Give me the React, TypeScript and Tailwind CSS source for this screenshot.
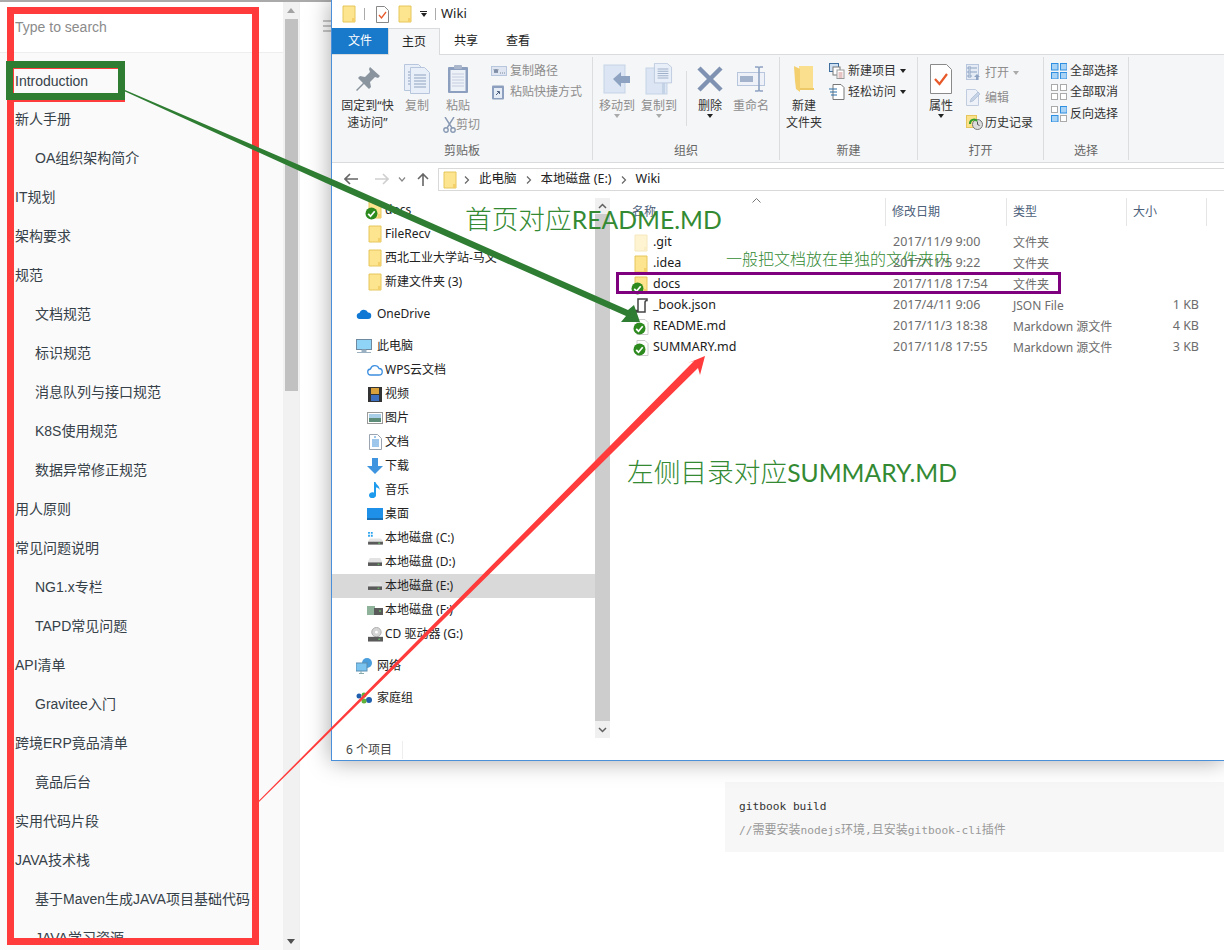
import { ReactNode } from "react";

const navItems = [
  { text: "Introduction", first: true },
  { text: "新人手册" },
  { text: "OA组织架构简介", sub: true },
  { text: "IT规划" },
  { text: "架构要求" },
  { text: "规范" },
  { text: "文档规范", sub: true },
  { text: "标识规范", sub: true },
  { text: "消息队列与接口规范", sub: true },
  { text: "K8S使用规范", sub: true },
  { text: "数据异常修正规范", sub: true },
  { text: "用人原则" },
  { text: "常见问题说明" },
  { text: "NG1.x专栏", sub: true },
  { text: "TAPD常见问题", sub: true },
  { text: "API清单" },
  { text: "Gravitee入门", sub: true },
  { text: "跨境ERP竟品清单" },
  { text: "竟品后台", sub: true },
  { text: "实用代码片段" },
  { text: "JAVA技术栈" },
  { text: "基于Maven生成JAVA项目基础代码", sub: true },
  { text: "JAVA学习资源", sub: true },
];

const Folder = ({ faded, className = "" }: { faded?: boolean; className?: string }) => (
  <svg width="14" height="18" viewBox="0 0 14 18" className={`${faded ? "opacity-40" : ""} ${className}`}>
    <path d="M1 1h12v16H1z" fill="#fde58f" stroke="#e6c65c" />
    <path d="M10 13h3v4h-3z" fill="#f4d06a" />
  </svg>
);

const Check = ({ className = "" }: { className?: string }) => (
  <svg width="13" height="13" viewBox="0 0 13 13" className={className}>
    <circle cx="6.5" cy="6.5" r="6" fill="#2d8a1e" />
    <path d="M3.2 6.8l2.3 2.4 4.2-5" fill="none" stroke="#fff" strokeWidth="1.7" />
  </svg>
);

const BadgedFolder = () => (
  <span className="relative block h-[18px] w-[14px]">
    <Folder />
    <Check className="absolute -left-[3px] top-[6px]" />
  </span>
);

const Doc = () => (
  <span className="relative block h-[16px] w-[14px]">
    <svg width="13" height="16" viewBox="0 0 13 16" className="absolute left-[2px] top-0">
      <path d="M1 .5h8l3 3v12H1z" fill="#fff" stroke="#ccc" />
    </svg>
    <Check className="absolute -left-[1px] top-[3px]" />
  </span>
);

const Page = ({ x = 0, y = 0 }: { x?: number; y?: number }) => (
  <g transform={`translate(${x} ${y})`}>
    <path d="M.5.5h14l5 5v21H.5z" fill="#e9eff8" stroke="#b7c6dc" />
    <path d="M4 8h12M4 11h12M4 14h12M4 17h12M4 20h12" stroke="#8fa3c0" />
  </g>
);

const PinIcon = () => (
  <svg width="26" height="26" viewBox="0 0 26 26">
    <path d="M15 1l10 9-2 2-3-1-5 5 1 5-2 2-5-5-7 7-1-1 7-7-5-5 2-2 5 1 5-5-1-3z" fill="#8a949f" />
  </svg>
);
const CopyIcon = () => (
  <svg width="26" height="30" viewBox="0 0 26 30">
    <Page />
    <Page x={6} y={3} />
  </svg>
);
const PasteIcon = () => (
  <svg width="22" height="30" viewBox="0 0 22 30">
    <rect x="1" y="3" width="20" height="26" rx="1" fill="#8c9fbe" />
    <rect x="3.5" y="6" width="15" height="21" fill="#edf1f8" />
    <path d="M5 10h12M5 13h12M5 16h12M5 19h12M5 22h12" stroke="#c5cfe0" />
    <rect x="7" y="1" width="8" height="4" rx="1" fill="#a9b6cc" />
  </svg>
);
const CutIcon = () => (
  <svg width="13" height="16" viewBox="0 0 13 16" fill="none" stroke="#8899b4" strokeWidth="1.4">
    <path d="M2 0l7 11M11 0L4 11" />
    <circle cx="3" cy="13" r="2.2" />
    <circle cx="10" cy="13" r="2.2" />
  </svg>
);
const PathIcon = () => (
  <svg width="16" height="10" viewBox="0 0 16 10">
    <rect x=".5" y=".5" width="15" height="9" fill="#dfe6f1" stroke="#b7c6dc" />
    <path d="M3 3l1 4 1-4 1 4 1-4M9 7h1M11 7h1M13 7h1" stroke="#5d6f8c" fill="none" strokeWidth=".8" />
  </svg>
);
const ShortcutIcon = () => (
  <svg width="14" height="16" viewBox="0 0 14 16">
    <rect x="1" y="1.5" width="12" height="14" rx="1" fill="#8c9fbe" />
    <rect x="3" y="4" width="8" height="10" fill="#e6ecf5" />
    <path d="M5 11l3-3M6 7.5h2.5V10" stroke="#4e617f" fill="none" />
  </svg>
);
const MoveIcon = () => (
  <svg width="28" height="30" viewBox="0 0 28 30">
    <rect x="1" y="1" width="21" height="28" fill="#dbe5f3" stroke="#c5d3e6" />
    <path d="M10 15l8-7v4h9v7h-9v4z" fill="#8ea3c2" />
  </svg>
);
const CopyToIcon = () => (
  <svg width="28" height="32" viewBox="0 0 28 32">
    <rect x="1" y="5" width="21" height="26" fill="#dbe5f3" stroke="#c5d3e6" />
    <rect x="17" y="5" width="3" height="26" fill="#c5d3e6" />
    <g transform="translate(9 0) scale(.9 .75)">
      <Page />
    </g>
  </svg>
);
const DeleteIcon = () => (
  <svg width="26" height="26" viewBox="0 0 26 26">
    <path d="M2 2l22 22M24 2L2 24" stroke="#7f92b2" strokeWidth="4.5" />
  </svg>
);
const RenameIcon = () => (
  <svg width="28" height="26" viewBox="0 0 28 26">
    <rect x=".5" y="6.5" width="27" height="13" fill="#eef2f8" stroke="#b7c6dc" />
    <rect x="3" y="10" width="13" height="6" fill="#a3b3cc" />
    <path d="M18 1h3l1 1 1-1h3M22 2v22M18 25h3l1-1 1 1h3" stroke="#8ea3c2" strokeWidth="1.6" fill="none" />
  </svg>
);
const NewFolderIcon = () => (
  <svg width="20" height="28" viewBox="0 0 20 28">
    <path d="M5 1h14v22H5z" fill="#fadf8e" />
    <path d="M0 1l6 3v23l-4-3-1-8z" fill="#f3cf6e" />
    <path d="M6 23h14v2H6z" fill="#edc968" />
  </svg>
);
const NewItemIcon = () => (
  <svg width="16" height="16" viewBox="0 0 16 16">
    <rect x=".5" y=".5" width="9" height="8" fill="#cfe0f3" stroke="#3f6f9e" />
    <rect x="4" y="4" width="7" height="8" fill="#fff" stroke="#777" />
    <rect x="8" y="7" width="7" height="8.5" fill="#fff" stroke="#999" />
    <path d="M9.5 10h4M9.5 12h4M9.5 14h4" stroke="#d08a8a" />
  </svg>
);
const EasyIcon = () => (
  <svg width="16" height="16" viewBox="0 0 16 16">
    <path d="M4 .5h8l3 3v12H4z" fill="#fff" stroke="#777" />
    <path d="M0 5h8M1 8h7M2 11h6" stroke="#2a6ea6" strokeWidth="1.1" />
  </svg>
);
const PropsIcon = () => (
  <svg width="22" height="30" viewBox="0 0 22 30">
    <path d="M.5.5h16l5 5v24H.5z" fill="#fff" stroke="#8a8a8a" />
    <path d="M5 15l4.5 5L17 10" fill="none" stroke="#e8592a" strokeWidth="2.2" />
  </svg>
);
const OpenIcon = () => (
  <svg width="15" height="17" viewBox="0 0 15 17">
    <rect x=".5" y=".5" width="12" height="15" fill="#e4ebf5" stroke="#b7c6dc" />
    <path d="M2 3h3v2H2zM2 7h3v2H2zM2 11h3v2H2zM6 4h5M6 8h5" stroke="#8ea3c2" fill="none" />
    <path d="M8 13l3-3 3 3h-2v3h-2v-3z" fill="#8ea3c2" />
  </svg>
);
const EditIcon = () => (
  <svg width="15" height="17" viewBox="0 0 15 17">
    <path d="M.5.5h9l3 3v13h-12z" fill="#eef2f8" stroke="#c0cde0" />
    <path d="M4 13l1-3 7-7 2 2-7 7z" fill="#c6d3e6" stroke="#9fb1cc" strokeWidth=".6" />
  </svg>
);
const HistoryIcon = () => (
  <svg width="17" height="15" viewBox="0 0 17 15">
    <rect x=".5" y=".5" width="10" height="12" fill="#fce18b" stroke="#e6c65c" />
    <circle cx="11.5" cy="9.5" r="5" fill="#ddd" stroke="#777" />
    <path d="M11.5 6.5v3l2 1" stroke="#555" fill="none" />
    <path d="M4 9a4 4 0 0 1 7-3" stroke="#2f9e2a" strokeWidth="2" fill="none" />
  </svg>
);
const Grid4 = ({ on }: { on: number[] }) => (
  <svg width="16" height="16" viewBox="0 0 16 16">
    {[
      [0, 0],
      [9, 0],
      [0, 9],
      [9, 9],
    ].map(([x, y], i) =>
      on.includes(i) ? (
        <rect key={i} x={x + 0.5} y={y + 0.5} width="6.5" height="6.5" fill="#a9d3f5" stroke="#2f8fe0" />
      ) : (
        <rect key={i} x={x + 0.5} y={y + 0.5} width="6" height="6" fill="#fff" stroke="#aaa" />
      ),
    )}
  </svg>
);

const Caret = ({ dark }: { dark?: boolean }) => (
  <span className={`inline-block h-0 w-0 border-x-[3.5px] border-t-[4px] border-x-transparent ${dark ? "border-t-[#222]" : "border-t-[#aaa]"}`} />
);

const Large = ({
  icon,
  children,
  w,
  off,
  caret,
}: {
  icon: ReactNode;
  children: ReactNode;
  w: string;
  off?: boolean;
  caret?: "dark" | "light";
}) => (
  <div className={`flex flex-col items-center ${w} ${off ? "text-[#8d8d8d]" : "text-[#333]"}`}>
    <div className="flex h-[37px] items-center justify-center">{icon}</div>
    <div className="whitespace-nowrap text-center leading-[17px]">{children}</div>
    {caret && (
      <div className="-mt-[1px] flex h-[6px] items-center">
        <Caret dark={caret === "dark"} />
      </div>
    )}
  </div>
);

const Small = ({
  icon,
  children,
  h,
  off,
  caret,
  iconW = "w-[19px]",
}: {
  icon: ReactNode;
  children: ReactNode;
  h: string;
  off?: boolean;
  caret?: "dark" | "light";
  iconW?: string;
}) => (
  <div className={`flex items-center whitespace-nowrap ${h} ${off ? "text-[#8d8d8d]" : "text-[#333]"}`}>
    <span className={`flex ${iconW} items-center`}>{icon}</span>
    {children}
    {caret && (
      <span className="ml-[4px] flex items-center">
        <Caret dark={caret === "dark"} />
      </span>
    )}
  </div>
);

const Group = ({ w, label, children }: { w: string; label: string; children: ReactNode }) => (
  <div className={`my-[2px] flex shrink-0 flex-col border-r border-[#dcdddf] ${w}`}>
    <div className="flex flex-1 pt-[3px]">{children}</div>
    <div className="h-[18px] text-center leading-[18px] text-[#666]">{label}</div>
  </div>
);

const Ribbon = () => (
  <div className="flex h-[107px] bg-[#f5f6f7] text-[12px]">
    <Group w="w-[261px]" label="剪贴板">
      <div className="w-[8px]" />
      <Large w="w-[55px]" icon={<PinIcon />}>
        固定到“快
        <br />
        速访问”
      </Large>
      <Large w="w-[44px]" off icon={<CopyIcon />}>
        复制
      </Large>
      <div className="w-[38px]">
        <Large w="w-[38px]" off icon={<PasteIcon />}>
          粘贴
        </Large>
        <div className="mt-[2px] pl-[4px]">
          <Small h="h-[18px]" off icon={<CutIcon />} iconW="w-[21px]">
            剪切
          </Small>
        </div>
      </div>
      <div className="ml-[14px]">
        <Small h="h-[21px]" off icon={<PathIcon />}>
          复制路径
        </Small>
        <Small h="h-[21px]" off icon={<ShortcutIcon />}>
          粘贴快捷方式
        </Small>
      </div>
    </Group>
    <Group w="w-[187px]" label="组织">
      <Large w="w-[48px]" off caret="light" icon={<MoveIcon />}>
        移动到
      </Large>
      <Large w="w-[36px]" off caret="light" icon={<CopyToIcon />}>
        复制到
      </Large>
      <div className="ml-[9px] mt-[11px] h-[55px] w-px bg-[#dcdddf]" />
      <Large w="w-[46px]" caret="dark" icon={<DeleteIcon />}>
        删除
      </Large>
      <Large w="w-[36px]" off icon={<RenameIcon />}>
        重命名
      </Large>
    </Group>
    <Group w="w-[138px]" label="新建">
      <Large w="w-[48px]" icon={<NewFolderIcon />}>
        新建
        <br />
        文件夹
      </Large>
      <div className="ml-[1px]">
        <Small h="h-[21px]" caret="dark" icon={<NewItemIcon />}>
          新建项目
        </Small>
        <Small h="h-[21px]" caret="dark" icon={<EasyIcon />}>
          轻松访问
        </Small>
      </div>
    </Group>
    <Group w="w-[126px]" label="打开">
      <Large w="w-[46px]" caret="dark" icon={<PropsIcon />}>
        属性
      </Large>
      <div className="ml-[2px]">
        <Small h="h-[25px]" off caret="light" icon={<OpenIcon />}>
          打开
        </Small>
        <Small h="h-[25px]" off icon={<EditIcon />}>
          编辑
        </Small>
        <Small h="h-[25px]" icon={<HistoryIcon />}>
          历史记录
        </Small>
      </div>
    </Group>
    <Group w="w-[85px]" label="选择">
      <div className="ml-[7px]">
        <Small h="h-[21.5px]" icon={<Grid4 on={[0, 1, 2, 3]} />}>
          全部选择
        </Small>
        <Small h="h-[21.5px]" icon={<Grid4 on={[]} />}>
          全部取消
        </Small>
        <Small h="h-[21.5px]" icon={<Grid4 on={[1, 2]} />}>
          反向选择
        </Small>
      </div>
    </Group>
  </div>
);

const Cloud = ({ color }: { color: string }) => (
  <svg width="16" height="12" viewBox="0 0 16 12">
    <path d="M4 11a3 3 0 0 1-.5-6A4.5 4.5 0 0 1 12 4.5a3.2 3.2 0 0 1 0 6.5z" fill={color} />
  </svg>
);

const navIcon: Record<string, ReactNode> = {
  folder: <Folder />,
  badged: <BadgedFolder />,
  onedrive: <Cloud color="#0f78d4" />,
  pc: (
    <svg width="16" height="15" viewBox="0 0 16 15">
      <rect x=".5" y=".5" width="15" height="10" fill="#8fd3f7" stroke="#6d8aa0" />
      <path d="M6 11h4v2H6zM1 13.5h14" stroke="#9bb0c0" fill="#9bb0c0" />
    </svg>
  ),
  wps: (
    <svg width="16" height="12" viewBox="0 0 16 12">
      <path d="M4 11a3 3 0 0 1-.5-6A4.5 4.5 0 0 1 12 4.5a3.2 3.2 0 0 1 0 6.5z" fill="#fff" stroke="#3d8fe0" strokeWidth="1.3" />
    </svg>
  ),
  video: (
    <svg width="14" height="15" viewBox="0 0 14 15">
      <rect width="14" height="15" fill="#333" />
      <rect x="3" y="1" width="8" height="6" fill="#d9a13b" />
      <rect x="3" y="8" width="8" height="6" fill="#3d6fc0" />
    </svg>
  ),
  picture: (
    <svg width="16" height="12" viewBox="0 0 16 12">
      <rect x=".5" y=".5" width="15" height="11" fill="#fff" stroke="#9a9a9a" />
      <rect x="2" y="2" width="12" height="4" fill="#a9cfe8" />
      <rect x="2" y="6" width="12" height="4" fill="#5d8c78" />
    </svg>
  ),
  doc: (
    <svg width="13" height="16" viewBox="0 0 13 16">
      <path d="M.5.5h8l4 4v11H.5z" fill="#fff" stroke="#9aa5b1" />
      <path d="M3 6h7M3 8h7M3 10h7M3 12h7M5 3h2" stroke="#3c8fd6" />
    </svg>
  ),
  download: (
    <svg width="16" height="16" viewBox="0 0 16 16">
      <path d="M5 0h6v8h5l-8 8-8-8h5z" fill="#3f94df" />
    </svg>
  ),
  music: (
    <svg width="12" height="16" viewBox="0 0 12 16">
      <path d="M5 0h1.5c.5 3 4.5 3.500 4 8C10 6 8 5.500 7 5.500V13a3.500 3 0 1 1-2-2.500z" fill="#1f9bee" />
    </svg>
  ),
  desktop: (
    <svg width="16" height="12" viewBox="0 0 16 12">
      <rect width="16" height="12" fill="#1e90e8" />
      <path d="M0 11h16" stroke="#154f80" />
    </svg>
  ),
  driveC: (
    <svg width="15" height="13" viewBox="0 0 16 14">
      <path d="M0 0h2v2H0zM3 0h2v2H3zM0 3h2v2H0zM3 3h2v2H3z" fill="#2aa3ee" />
      <path d="M2 7h12l2 3v4H0v-4z" fill="#e3e3e3" />
      <rect y="10.500" width="16" height="3" fill="#5a5a5a" />
      <rect x="11" y="11.500" width="2" height="1" fill="#6fe06f" />
    </svg>
  ),
  drive: (
    <svg width="14" height="8" viewBox="0 0 16 9">
      <path d="M2 0h12l2 4v5H0V4z" fill="#e3e3e3" />
      <rect y="5" width="16" height="4" fill="#5a5a5a" />
      <rect x="11" y="6.500" width="2" height="1" fill="#6fe06f" />
    </svg>
  ),
  driveF: (
    <svg width="16" height="9" viewBox="0 0 16 9">
      <rect width="8" height="9" fill="#8fb39a" />
      <rect x="7" y="2" width="9" height="7" fill="#5a5a5a" />
      <rect x="12" y="4.500" width="2" height="1" fill="#6fe06f" />
    </svg>
  ),
  cd: (
    <svg width="15" height="15" viewBox="0 0 16 15">
      <circle cx="9" cy="5" r="5" fill="#d5d5d5" stroke="#aaa" />
      <circle cx="9" cy="5" r="1.500" fill="#fff" />
      <rect y="10" width="16" height="5" fill="#5a5a5a" />
      <rect x="11" y="12" width="2" height="1" fill="#6fe06f" />
    </svg>
  ),
  network: (
    <svg width="16" height="16" viewBox="0 0 16 16">
      <circle cx="11" cy="5" r="5" fill="#4a9edb" />
      <rect x="0" y="5" width="11" height="8" fill="#7cc4f0" stroke="#5b8db0" />
      <path d="M5 13v2M3 15.500h5" stroke="#8aa" />
    </svg>
  ),
  homegroup: (
    <svg width="16" height="12" viewBox="0 0 16 12">
      <circle cx="3" cy="4" r="2.500" fill="#1f5fae" />
      <circle cx="13" cy="8" r="3" fill="#1f5fae" />
      <circle cx="8" cy="3" r="2.500" fill="#5fb23c" />
      <circle cx="8" cy="9" r="2.500" fill="#5fb23c" />
    </svg>
  ),
};

const explorerNav = [
  { label: "docs", icon: "badged", sub: true },
  { label: "FileRecv", icon: "folder", sub: true },
  { label: "西北工业大学站-马文", icon: "folder", sub: true },
  { label: "新建文件夹 (3)", icon: "folder", sub: true },
  { label: "OneDrive", icon: "onedrive", gap: true },
  { label: "此电脑", icon: "pc", gap: true },
  { label: "WPS云文档", icon: "wps", sub: true },
  { label: "视频", icon: "video", sub: true },
  { label: "图片", icon: "picture", sub: true },
  { label: "文档", icon: "doc", sub: true },
  { label: "下载", icon: "download", sub: true },
  { label: "音乐", icon: "music", sub: true },
  { label: "桌面", icon: "desktop", sub: true },
  { label: "本地磁盘 (C:)", icon: "driveC", sub: true },
  { label: "本地磁盘 (D:)", icon: "drive", sub: true },
  { label: "本地磁盘 (E:)", icon: "drive", sub: true, active: true },
  { label: "本地磁盘 (F:)", icon: "driveF", sub: true },
  { label: "CD 驱动器 (G:)", icon: "cd", sub: true },
  { label: "网络", icon: "network", gap: true },
  { label: "家庭组", icon: "homegroup", gap: true },
];

const files = [
  { name: ".git", date: "2017/11/9 9:00", type: "文件夹", size: "", icon: <Folder faded /> },
  { name: ".idea", date: "2017/11/5 9:22", type: "文件夹", size: "", icon: <Folder /> },
  { name: "docs", date: "2017/11/8 17:54", type: "文件夹", size: "", icon: <BadgedFolder /> },
  {
    name: "_book.json",
    date: "2017/4/11 9:06",
    type: "JSON File",
    size: "1 KB",
    icon: (
      <svg width="14" height="15" viewBox="0 0 14 15">
        <path d="M4 1h9v1.500c-2 0-2 1-2 2V14H1v-1.500h3z" fill="#fff" stroke="#444" strokeWidth="1.500" />
      </svg>
    ),
  },
  { name: "README.md", date: "2017/11/3 18:38", type: "Markdown 源文件", size: "4 KB", icon: <Doc /> },
  { name: "SUMMARY.md", date: "2017/11/8 17:55", type: "Markdown 源文件", size: "3 KB", icon: <Doc /> },
];

const Chevron = () => (
  <svg width="6" height="8" viewBox="0 0 6 8" className="mx-[9px]">
    <path d="M1 .5L4.500 4 1 7.500" fill="none" stroke="#666" strokeWidth="1.200" />
  </svg>
);

const Explorer = () => (
  <div className="absolute left-[331px] top-0 flex h-[761px] w-[893px] flex-col border-b border-l border-[#4a8fd9] bg-white text-[#222] shadow-[0_0_22px_rgba(0,0,0,0.35)] [font-family:'Noto_Sans','Noto_Sans_CJK_SC',sans-serif]">
    <div className="flex h-[28px] items-center pl-[10px]">
      <Folder />
      <div className="ml-[8px] h-[12px] w-px bg-[#aaa]" />
      <svg width="13" height="17" viewBox="0 0 13 17" className="ml-[11px]">
        <path d="M.5.500h8l4 4v12H.5z" fill="#fff" stroke="#888" />
        <path d="M3 9l2.500 3L10 6" fill="none" stroke="#e8592a" strokeWidth="1.300" />
      </svg>
      <span className="ml-[9px]">
        <Folder />
      </span>
      <span className="ml-[8px] flex flex-col items-center">
        <span className="mb-[1px] h-px w-[7px] bg-[#222]" />
        <Caret dark />
      </span>
      <div className="ml-[8px] h-[12px] w-px bg-[#aaa]" />
      <span className="ml-[5px] text-[13px]">Wiki</span>
    </div>
    <div className="flex h-[27px] items-stretch border-b border-[#dadbdc] text-[12px]">
      <div className="flex w-[56px] items-center justify-center bg-[#1979ca] text-white">文件</div>
      <div className="z-10 -mb-px flex w-[52px] items-center justify-center border-x border-t border-[#dadbdc] bg-[#f5f6f7]">主页</div>
      <div className="flex w-[52px] items-center justify-center">共享</div>
      <div className="flex w-[52px] items-center justify-center">查看</div>
    </div>
    <Ribbon />
    <div className="h-px bg-[#dadbdc]" />
    <div className="flex h-[35px] items-start pt-[5px] text-[12.5px]">
      <div className="flex h-[22px] w-[106px] shrink-0 items-center pl-[12px]">
        <svg width="14" height="12" viewBox="0 0 14 12" fill="none" stroke="#666" strokeWidth="1.600">
          <path d="M14 6H1M6 1L1 6l5 5" />
        </svg>
        <svg width="14" height="12" viewBox="0 0 14 12" fill="none" stroke="#cfcfcf" strokeWidth="1.600" className="ml-[17px]">
          <path d="M0 6h13M8 1l5 5-5 5" />
        </svg>
        <svg width="8" height="5" viewBox="0 0 8 5" fill="none" stroke="#888" strokeWidth="1.200" className="ml-[9px]">
          <path d="M1 .5L4 4 7 .5" />
        </svg>
        <svg width="12" height="13" viewBox="0 0 12 13" fill="none" stroke="#666" strokeWidth="1.600" className="ml-[11px]">
          <path d="M6 13V1M1 6l5-5 5 5" />
        </svg>
      </div>
      <div className="flex h-[23px] flex-1 items-center border-y border-l border-[#d9d9d9] pl-[4px]">
        <Folder />
        <span className="-ml-[2px] flex items-center">
          <Chevron />
          此电脑
          <Chevron />
          本地磁盘 (E:)
          <Chevron />
          Wiki
        </span>
      </div>
    </div>
    <div className="flex min-h-0 flex-1">
      <div className="w-[263px] shrink-0 overflow-hidden text-[12px]">
        {explorerNav.map((item) => (
          <div
            key={item.label}
            className={`flex h-[24px] items-center ${item.gap ? "mt-[8px]" : ""} ${item.sub ? "pl-[33px]" : "pl-[24px]"} ${item.active ? "bg-[#d9d9d9]" : ""}`}
          >
            <span className={`flex h-[18px] items-center justify-center ${item.sub ? "w-[20px]" : "w-[21px] justify-start"}`}>{navIcon[item.icon]}</span>
            <span className="whitespace-nowrap">{item.label}</span>
          </div>
        ))}
      </div>
      <div className="flex w-[15px] shrink-0 flex-col bg-[#f0f0f0]">
        <div className="flex h-[16px] items-center justify-center">
          <svg width="9" height="6" viewBox="0 0 9 6" fill="none" stroke="#606060" strokeWidth="1.500">
            <path d="M1 5l3.500-3.500L8 5" />
          </svg>
        </div>
        <div className="flex-1 bg-[#cdcdcd]" />
        <div className="flex h-[17px] items-center justify-center">
          <svg width="9" height="6" viewBox="0 0 9 6" fill="none" stroke="#606060" strokeWidth="1.500">
            <path d="M1 1l3.500 3.500L8 1" />
          </svg>
        </div>
      </div>
      <div className="min-w-0 flex-1">
        <div className="relative flex h-[34px] text-[12px] text-[#4c607a]">
          <svg width="9" height="5" viewBox="0 0 9 5" fill="none" stroke="#777" className="absolute left-[142px] top-0">
            <path d="M.5 4.500L4.500 .5l4 4" />
          </svg>
          <div className="flex h-[28px] w-[276px] items-center border-r border-[#e5e5e5] pl-[22px]">名称</div>
          <div className="flex h-[28px] w-[121px] items-center border-r border-[#e5e5e5] pl-[6px]">修改日期</div>
          <div className="flex h-[28px] w-[120px] items-center border-r border-[#e5e5e5] pl-[6px]">类型</div>
          <div className="flex h-[28px] w-[80px] items-center border-r border-[#e5e5e5] pl-[6px]">大小</div>
        </div>
        {files.map((f) => (
          <div key={f.name} className="flex h-[21px] items-center text-[#6d6d6d]">
            <div className="flex w-[276px] items-center pl-[24px] text-[12.5px] text-[#1a1a1a]">
              <span className="flex w-[19px] items-center">{f.icon}</span>
              {f.name}
            </div>
            <div className="w-[121px] pl-[7px] text-[12.5px]">{f.date}</div>
            <div className="w-[120px] pl-[6px] text-[12px]">{f.type}</div>
            <div className="w-[72px] text-right text-[12.5px]">{f.size}</div>
          </div>
        ))}
      </div>
    </div>
    <div className="flex h-[22px] items-center pl-[14px] pt-[1px] text-[12px] text-[#444]">
      <span className="w-[57px] border-r border-[#eee]">6 个项目</span>
    </div>
  </div>
);

const Annotations = () => (
  <>
    <div className="absolute left-[7px] top-[7px] h-[938px] w-[252px] border-[7px] border-[#ff3b3b]" />
    <div className="absolute left-[7px] top-[68px] h-[34px] w-[118px] border-b-2 border-t border-[#ff3b3b]" />
    <div className="absolute left-[6px] top-[61px] h-[39px] w-[119px] border-[7px] border-[#2e7d32]" />
    <div className="absolute left-[616px] top-[272px] h-[22px] w-[445px] border-[3px] border-[#7f007f]" />
    <svg width="1224" height="950" viewBox="0 0 1224 950" className="absolute left-0 top-0">
      <path d="M125 90L340 182.500 628 310 634 305 640 322 621 322 626 316 338 188.500 125 91.500z" fill="#2e7d32" />
      <path d="M259 800.500L694 361 688 363 705 356 700 375 698 368 259 802z" fill="#ff3b3b" />
    </svg>
    <div className="absolute left-[465px] top-[201px] whitespace-nowrap text-[26.7px] font-extralight leading-[34px] text-[#338a33] [font-family:'Noto_Sans_CJK_SC',sans-serif]">
      首页对应<span className="text-[24.7px] font-normal [font-family:Lato,sans-serif]">README.MD</span>
    </div>
    <div className="absolute left-[627px] top-[454px] whitespace-nowrap text-[26.7px] font-extralight leading-[34px] text-[#338a33] [font-family:'Noto_Sans_CJK_SC',sans-serif]">
      左侧目录对应<span className="text-[24.7px] font-normal [font-family:Lato,sans-serif]">SUMMARY.MD</span>
    </div>
    <div className="absolute left-[726px] top-[247px] whitespace-nowrap text-[16px] font-extralight leading-[22px] text-[#338a33] [font-family:'Noto_Sans_CJK_SC',sans-serif]">
      一般把文档放在单独的文件夹内
    </div>
  </>
);

export default function App() {
  return (
    <div className="relative h-[950px] w-[1224px] overflow-hidden bg-white [font-family:'Liberation_Sans','Noto_Sans_CJK_SC',sans-serif]">
      <div className="flex h-full border-t-2 border-[#aaa]">
        <div className="flex w-[283px] shrink-0 flex-col overflow-hidden bg-[#fafafa]">
          <div className="h-[51px] border-b border-[#eee] bg-white">
            <input
              readOnly
              placeholder="Type to search"
              className="h-[50px] w-full bg-transparent pl-[15px] text-[14px] outline-none placeholder:text-[#8b8b8b]"
            />
          </div>
          <div className="pt-[9px] text-[14px] text-[#364149]">
            {navItems.map((item) => (
              <div key={item.text} className={`flex ${item.first ? "h-[38px]" : "h-[39px]"} items-center whitespace-nowrap ${item.sub ? "pl-[35px]" : "pl-[15px]"}`}>
                {item.text}
              </div>
            ))}
          </div>
        </div>
        <div className="flex w-[16px] shrink-0 flex-col items-center bg-[#f1f1f1]">
          <div className="flex h-[17px] items-center justify-center">
            <span className="h-0 w-0 border-x-[4px] border-b-[5px] border-x-transparent border-b-[#a3a3a3]" />
          </div>
          <div className="h-[372px] w-[13px] bg-[#c1c1c1]" />
          <div className="flex-1" />
          <div className="flex h-[17px] items-center justify-center">
            <span className="h-0 w-0 border-x-[4px] border-t-[5px] border-x-transparent border-t-[#505050]" />
          </div>
        </div>
        <div className="min-w-0 flex-1 border-l border-[#eee]">
          <div className="ml-[23px] mt-[18px] h-[12px] w-[10px] border-y-2 border-[#c8c8c8] bg-[linear-gradient(#c8c8c8,#c8c8c8)] bg-[length:100%_2px] bg-center bg-no-repeat" />
          <div className="ml-[425px] mt-[750px] h-[70px] bg-[#f7f7f7] pl-[14px] pt-[15px] text-[11.2px] [font-family:'DejaVu_Sans_Mono','Noto_Sans_CJK_SC',monospace]">
            <div className="leading-[20px] text-[#333]">gitbook build</div>
            <div className="mt-[3px] leading-[20px] text-[#999]">
              //<span className="text-[12px]">需要安装</span>nodejs<span className="text-[12px]">环境</span>,<span className="text-[12px]">且安装</span>gitbook-cli<span className="text-[12px]">插件</span>
            </div>
          </div>
        </div>
      </div>
      <Explorer />
      <Annotations />
    </div>
  );
}
